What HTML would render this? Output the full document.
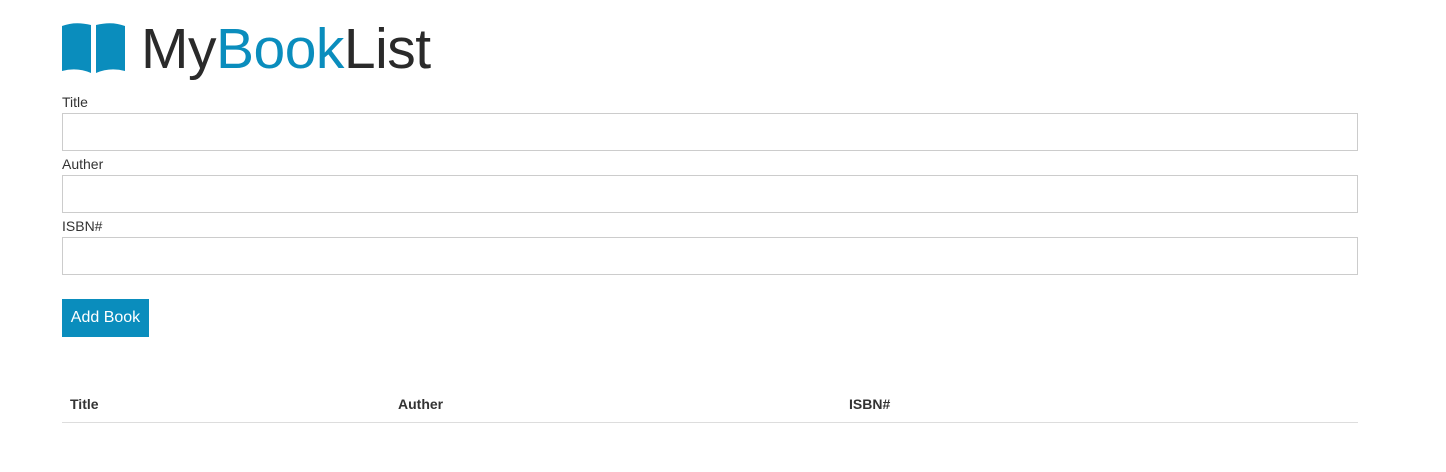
<!DOCTYPE html>
<html><head><meta charset="utf-8"><style>
body{margin:0;background:#fff;font-family:"Liberation Sans",sans-serif;color:#333;}
.logo{position:absolute;left:62px;top:22px;}
.brand{position:absolute;left:141px;top:14px;font-size:57px;font-weight:300;color:#2a2a2a;line-height:70px;letter-spacing:-0.5px;}
.brand span{color:#0a8dbd;}
label{position:absolute;left:62px;font-size:14px;color:#333;}
.in{position:absolute;left:62px;width:1294px;height:36px;border:1px solid #ccc;}
.btn{position:absolute;left:62px;top:299px;width:87px;height:38px;background:#0a8dbd;color:#fff;font-size:16px;line-height:38px;text-align:center;}
th{position:absolute;top:396px;font-size:14px;font-weight:bold;color:#333;}
.line{position:absolute;left:62px;top:422px;width:1296px;height:1px;background:#ddd;}
</style></head><body>
<svg class="logo" width="64" height="51" viewBox="0 0 64 51">
<path d="M0 4 Q13 -1 29 3 L29 51 Q15 45 0 49 Z" fill="#0a8dbd"/>
<path d="M34 3 Q50 -1 63 4 L63 49 Q48 45 34 51 Z" fill="#0a8dbd"/>
</svg>
<div class="brand">My<span>Book</span>List</div>
<label style="top:94px">Title</label>
<div class="in" style="top:113px"></div>
<label style="top:156px">Auther</label>
<div class="in" style="top:175px"></div>
<label style="top:218px">ISBN#</label>
<div class="in" style="top:237px"></div>
<div class="btn">Add Book</div>
<div style="position:absolute;top:396px;left:70px;font-size:14px;font-weight:bold">Title</div>
<div style="position:absolute;top:396px;left:398px;font-size:14px;font-weight:bold">Auther</div>
<div style="position:absolute;top:396px;left:849px;font-size:14px;font-weight:bold">ISBN#</div>
<div class="line"></div>
</body></html>
